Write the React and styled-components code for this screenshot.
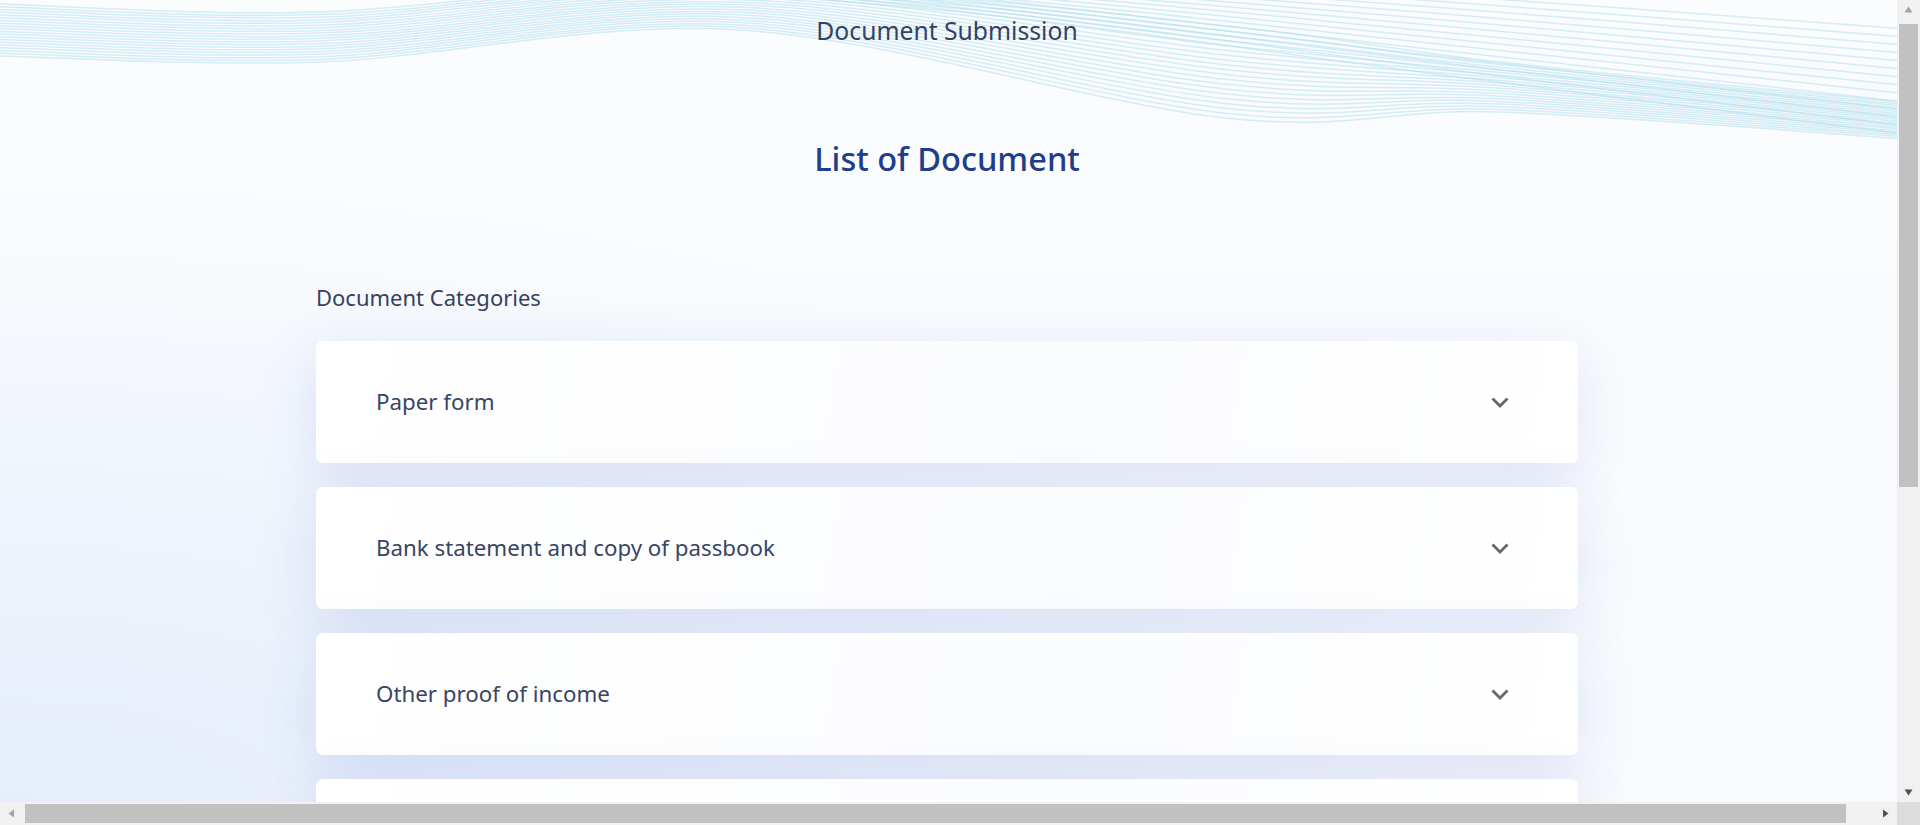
import React from "react";
import styled, { createGlobalStyle } from "styled-components";

const GlobalStyle = createGlobalStyle`
  html, body { margin: 0; padding: 0; }
  body {
    font-family: "Noto Sans", "Open Sans", sans-serif;
    background: #f9fbfe;
  }
  * { box-sizing: border-box; }
`;

const Page = styled.div`
  position: relative;
  min-height: 1351px;
  background:
    radial-gradient(110% 70% at 0% 62%, rgba(226, 236, 250, 0.9) 0%, rgba(226, 236, 250, 0) 70%),
    linear-gradient(180deg, #fbfcfe 0%, #f6f8fd 100%);
  padding: 15px 26px 158px 0;
`;

const WaveLayer = styled.svg`
  position: absolute;
  top: 0;
  left: 0;
  width: 1920px;
  height: 160px;
  pointer-events: none;
`;

const Main = styled.main`
  position: relative;
  display: flex;
  flex-direction: column;
  align-items: center;
`;

const TopTitle = styled.div`
  font-size: 24.7px;
  line-height: 32px;
  color: #36425f;
`;

const Heading = styled.h1`
  margin: 90px 0 0;
  font-size: 32.6px;
  line-height: 44px;
  font-weight: 500;
  color: #1f3e88;
`;

const Column = styled.section`
  width: 1262px;
  margin-top: 101px;
  display: flex;
  flex-direction: column;
`;

const SectionLabel = styled.h2`
  margin: 0 0 29px;
  font-size: 22px;
  line-height: 30px;
  font-weight: 400;
  color: #36425f;
`;

const CardList = styled.div`
  display: flex;
  flex-direction: column;
  gap: 24px;
`;

const Card = styled.button`
  all: unset;
  box-sizing: border-box;
  height: 122px;
  display: flex;
  align-items: center;
  justify-content: space-between;
  padding: 0 69px 0 60px;
  border-radius: 7px;
  background: linear-gradient(100deg, #ffffff 0%, #fbfcfe 60%, #ffffff 100%);
  box-shadow: 0 14px 60px rgba(45, 80, 190, 0.13);
  cursor: pointer;
`;

const CardTitle = styled.span`
  font-family: "Noto Sans", "Open Sans", sans-serif;
  font-size: 22.3px;
  line-height: 30px;
  color: #384565;
`;

const Chevron = styled.svg`
  width: 18px;
  height: 11px;
  flex: none;
`;

/* browser-like scrollbars drawn over the page */
const VBar = styled.div`
  position: fixed;
  top: 0;
  right: 0;
  width: 23px;
  height: 802px;
  background: #f1f1f1;
`;

const HBar = styled.div`
  position: fixed;
  left: 0;
  bottom: 0;
  width: 1897px;
  height: 23px;
  background: #f1f1f1;
`;

const Corner = styled.div`
  position: fixed;
  right: 0;
  bottom: 0;
  width: 23px;
  height: 23px;
  background: #dcdcdc;
`;

const VThumb = styled.div`
  position: absolute;
  left: 2px;
  right: 2px;
  top: 24px;
  height: 463px;
  background: #c1c1c1;
`;

const HThumb = styled.div`
  position: absolute;
  top: 2px;
  bottom: 2px;
  left: 25px;
  width: 1821px;
  background: #c1c1c1;
`;

const Arrow = styled.svg`
  position: absolute;
  width: 9px;
  height: 9px;
`;

function Scrollbars() {
  return (
    <>
      <VBar>
        <Arrow viewBox="0 0 9 9" style={{ left: 7, top: 5 }}>
          <polygon points="0.5,7.5 4.5,1.5 8.5,7.5" fill="#a3a3a3" />
        </Arrow>
        <VThumb />
        <Arrow viewBox="0 0 9 9" style={{ left: 7, bottom: 5 }}>
          <polygon points="0.5,1.5 4.5,7.5 8.5,1.5" fill="#505050" />
        </Arrow>
      </VBar>
      <HBar>
        <Arrow viewBox="0 0 9 9" style={{ left: 7, top: 7 }}>
          <polygon points="7,0.5 1.5,4.5 7,8.5" fill="#a3a3a3" />
        </Arrow>
        <HThumb />
        <Arrow viewBox="0 0 9 9" style={{ right: 7, top: 7 }}>
          <polygon points="2,0.5 7.5,4.5 2,8.5" fill="#505050" />
        </Arrow>
      </HBar>
      <Corner />
    </>
  );
}

const lerp = (a, b, t) => a + (b - a) * t;

function smoothPath(pts) {
  let d = `M${pts[0][0]} ${pts[0][1].toFixed(1)}`;
  for (let i = 0; i < pts.length - 1; i++) {
    const p0 = pts[i - 1] || pts[i];
    const p1 = pts[i];
    const p2 = pts[i + 1];
    const p3 = pts[i + 2] || p2;
    const c1x = p1[0] + (p2[0] - p0[0]) / 6;
    const c1y = p1[1] + (p2[1] - p0[1]) / 6;
    const c2x = p2[0] - (p3[0] - p1[0]) / 6;
    const c2y = p2[1] - (p3[1] - p1[1]) / 6;
    d += ` C${c1x.toFixed(1)} ${c1y.toFixed(1)} ${c2x.toFixed(1)} ${c2y.toFixed(1)} ${p2[0]} ${p2[1].toFixed(1)}`;
  }
  return d;
}

function family(xs, top, bot, n) {
  const out = [];
  for (let i = 0; i < n; i++) {
    const t = i / (n - 1);
    out.push(smoothPath(xs.map((x, k) => [x, lerp(top[k], bot[k], t)])));
  }
  return out;
}

const waveA = family(
  [0, 320, 740, 1225, 1500, 1920],
  [4, 12, -18, 26, 62, 104],
  [56, 62, 30, 118, 112, 140],
  20
);
const waveB = family(
  [560, 980, 1420, 1920],
  [-42, -30, -6, 30],
  [-20, 14, 72, 136],
  14
);

function Waves() {
  return (
    <WaveLayer viewBox="0 0 1920 160" aria-hidden="true">
      <g fill="none" stroke="#a9dcea" strokeWidth="1.5" strokeOpacity="0.48">
        {waveA.map((d, i) => (
          <path key={`a${i}`} d={d} />
        ))}
        {waveB.map((d, i) => (
          <path key={`b${i}`} d={d} />
        ))}
      </g>
    </WaveLayer>
  );
}

const categories = [
  "Paper form",
  "Bank statement and copy of passbook",
  "Other proof of income",
  "Identification documents",
  "Supporting documents",
  "Other documents",
];

export default function App() {
  return (
    <>
      <GlobalStyle />
      <Page>
        <Waves />
        <Main>
          <TopTitle>Document Submission</TopTitle>
          <Heading>List of Document</Heading>
          <Column>
            <SectionLabel>Document Categories</SectionLabel>
            <CardList>
              {categories.map((c) => (
                <Card key={c}>
                  <CardTitle>{c}</CardTitle>
                  <Chevron viewBox="0 0 18 11">
                    <polyline
                      points="1.5,1.5 9,9 16.5,1.5"
                      fill="none"
                      stroke="#666666"
                      strokeWidth="2.8"
                    />
                  </Chevron>
                </Card>
              ))}
            </CardList>
          </Column>
        </Main>
      </Page>
      <Scrollbars />
    </>
  );
}
